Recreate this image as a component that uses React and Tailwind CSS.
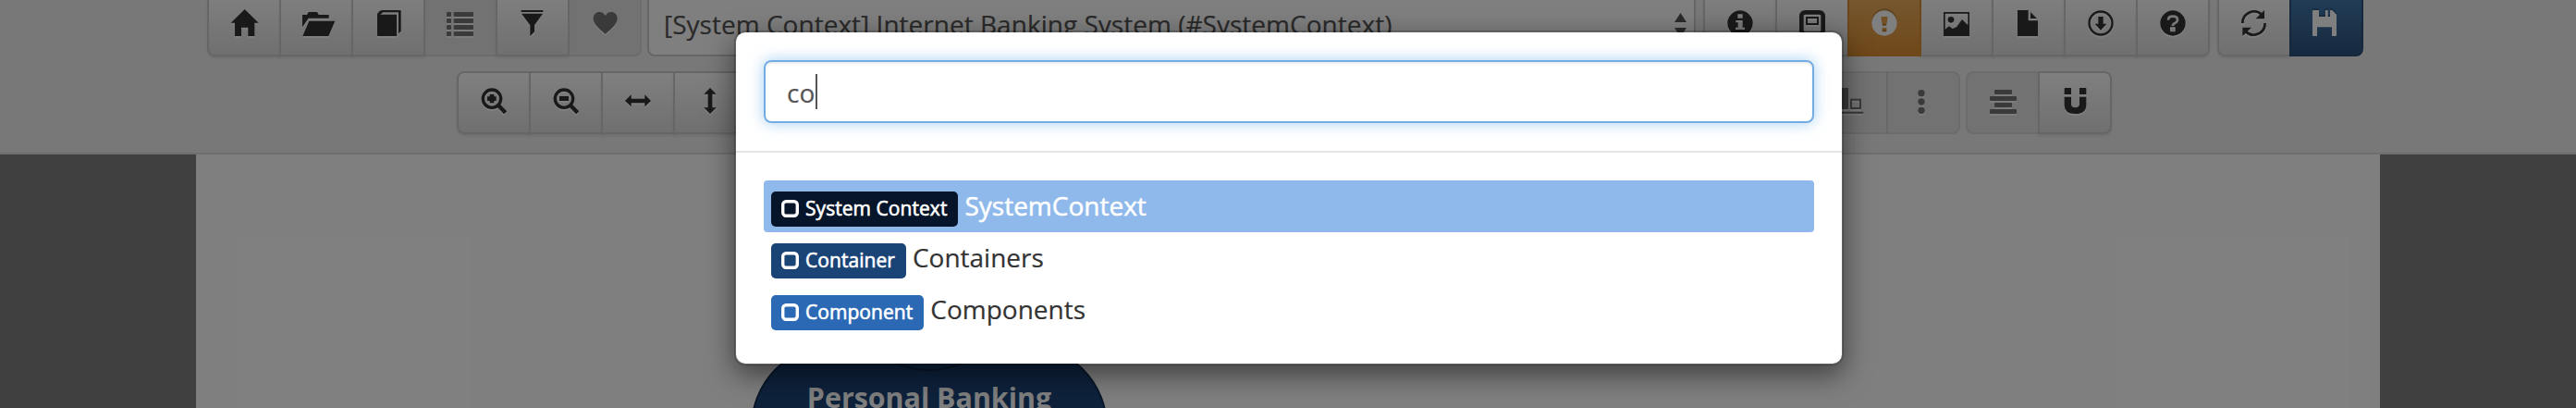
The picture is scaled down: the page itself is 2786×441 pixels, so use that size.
import React from "react";

/* Glyphs share an 84-unit square, shown at 28px. */
const glyphs = {
  home: <path d="M44-3 89 41H76V84H55V56H33V84H12V41H-1Z" />,
  folder: <path d="M-3 15H12L17 6H45L50 15H83V26H17L-3 55ZM19 35H103L82 84H-2Z" />,
  book: (
    <>
      <path d="M6 14H69V84H9Q6 84 6 81Z" />
      <path d="M6 16V12Q12 2 20 0H79Q83 0 83 4V68L75 76V7H24L17 14Z" />
    </>
  ),
  list: (
    <>
      {[6, 27, 48, 69].map((y) => (
        <React.Fragment key={y}>
          <rect x="-3" y={y} width="15" height="15" rx="3" />
          <rect x="20" y={y} width="64" height="15" rx="3" />
        </React.Fragment>
      ))}
    </>
  ),
  filter: <path d="M5 0H76V6H5ZM6 11H75L48 49V70L34 84V49Z" />,
  heart: <path d="M44 78C38 70 5 50 5 28C5 14 14 6 25 6C34 6 40 11 44 18C48 11 54 6 63 6C74 6 83 14 83 28C83 50 50 70 44 78Z" />,
  zoomIn: (
    <>
      <circle cx="36" cy="35" r="29" fill="none" stroke="currentColor" strokeWidth="10" />
      <path d="M58 58 80 80" stroke="currentColor" strokeWidth="13" />
      <path d="M29 21H43V28H50V42H43V49H29V42H21V28H29Z" />
    </>
  ),
  zoomOut: (
    <>
      <circle cx="36" cy="35" r="29" fill="none" stroke="currentColor" strokeWidth="10" />
      <path d="M58 58 80 80" stroke="currentColor" strokeWidth="13" />
      <path d="M21 27H51V42H21Z" />
    </>
  ),
  horizontal: <path d="M0 42 20 22V35H64V22L84 42 64 61V49H20V61Z" />,
  vertical: <path d="M42 0 62 20H49V64H62L42 84 22 64H35V20H22Z" />,
  info: <path fillRule="evenodd" d="M42 1A41 41 0 1 1 41.9 1ZM34 13V26H50V13ZM28 33V40H35V56H27V63H57V56H50V33Z" />,
  window: (
    <>
      <rect x="7" y="7" width="70" height="70" rx="12" fill="none" stroke="currentColor" strokeWidth="14" />
      <rect x="24" y="24" width="36" height="21" fill="none" stroke="currentColor" strokeWidth="6" />
    </>
  ),
  alert: <path fillRule="evenodd" d="M42 1A41 41 0 1 1 41.9 1ZM32 21V30L36 50H48L52 30V21ZM35 57V70H49V57Z" />,
  picture: (
    <>
      <path fillRule="evenodd" d="M0 6H84V84H0ZM5 11V62L18 52 29 60 42 55 60 30 79 49V11Z" />
      <circle cx="24" cy="31" r="10" />
    </>
  ),
  file: <path d="M6 0H41V34H72V84H6ZM48 6 69 27H48Z" />,
  download: (
    <>
      <circle cx="42" cy="42" r="37.5" fill="none" stroke="currentColor" strokeWidth="7" />
      <path d="M34 21H50V44H61L42 65 23 44H34Z" />
    </>
  ),
  help: (
    <>
      <path fillRule="evenodd" d="M42 1A41 41 0 1 1 41.9 1ZM33 55V70H50V55Z" />
      <path d="M27 32Q27 20 42 20Q57 20 57 31Q57 38 50 41Q42 44 41 51" fill="none" className="stroke-[#f0f0f0]" strokeWidth="8" />
    </>
  ),
  refresh: (
    <>
      <path d="M4 42A37 37 0 0 1 67 15M77 42A37 37 0 0 1 14 69" fill="none" stroke="currentColor" strokeWidth="8" />
      <path d="M75 0V28H47ZM4 84V56H33Z" />
    </>
  ),
  save: <path d="M-1 0H18V21H39V0H47V21H54V0H61L75 14V82L73 84H60V55H12V84H-1L-3 82V2Z" />,
  alignBottom: (
    <>
      <path d="M6 0H33V69H6ZM0 77H82V83H0Z" />
      <rect x="42" y="38" width="30" height="28" fill="none" stroke="currentColor" strokeWidth="6" />
    </>
  ),
  dots: (
    <>
      <circle cx="36" cy="17" r="11" />
      <circle cx="36" cy="45" r="11" />
      <circle cx="36" cy="73" r="11" />
    </>
  ),
  alignCenter: (
    <>
      <rect x="15" y="6" width="57" height="15" rx="3" />
      <rect x="0" y="27" width="87" height="15" rx="3" />
      <rect x="15" y="48" width="57" height="15" rx="3" />
      <rect x="0" y="69" width="87" height="15" rx="3" />
    </>
  ),
  magnet: <path d="M8 2Q8 0 10 0H30V21H8ZM57 0H77Q79 0 79 2V21H57ZM8 29H30V55Q32 64 43 64Q55 64 57 55V29H79V56Q78 84 43 84Q9 84 8 56Z" />,
};

function Glyph({ name, className = "" }) {
  return (
    <svg viewBox="0 0 84 84" className={`size-7 overflow-visible ${className}`} fill="currentColor">
      {glyphs[name]}
    </svg>
  );
}

const tones = {
  normal:
    "border-[#cccccc] bg-linear-to-b from-white to-[#e0e0e0] text-[#333333] shadow-[inset_0_2px_0_rgba(255,255,255,.15),0_2px_2px_rgba(0,0,0,.075)]",
  disabled: "border-[#cccccc] bg-[#e0e0e0] text-[#333333] opacity-65",
  warning: "z-10 border-[#d98f35] bg-linear-to-b from-[#ecb060] to-[#e09032] text-white",
  primary: "z-10 border-[#2a5078] bg-linear-to-b from-[#457bb0] to-[#2e557f] text-white",
};

function Group({ items }) {
  return (
    <div className="flex shrink-0">
      {items.map(([icon, tone = "normal"], i) => (
        <button
          key={i}
          className={`relative -mr-0.5 flex h-[68px] w-20 shrink-0 items-start border-2 pt-4 pl-6 first:rounded-l-lg last:mr-0 last:rounded-r-lg ${tones[tone]}`}
        >
          {icon && (
            <Glyph
              name={icon}
              className={tone === "normal" || tone === "disabled" ? "drop-shadow-[0_2px_0_#ffffff]" : "drop-shadow-[0_-2px_0_rgba(0,0,0,.2)]"}
            />
          )}
        </button>
      ))}
    </div>
  );
}

function Result({ label, color, name, active }) {
  return (
    <div className={`flex h-14 items-start rounded px-2 pt-3 ${active ? "bg-[#8fb9eb] text-white" : "text-[#333333]"}`}>
      <span className={`flex h-[38px] shrink-0 items-center rounded-[5px] pr-3 pl-[11px] text-[21px] leading-[38px] tracking-[0.05px] text-white [-webkit-text-stroke:0.6px] ${color}`}>
        <svg viewBox="0 0 19 19" className="-mt-px mr-[7px] size-[19px]" fill="none" stroke="currentColor" strokeWidth="3.4">
          <rect x="1.7" y="1.7" width="15.6" height="15.6" rx="3.5" />
        </svg>
        <span className="-mt-0.5">{label}</span>
      </span>
      <span className={`-mt-px ml-[7px] text-[28px] leading-8 ${active ? "[-webkit-text-stroke:0.5px]" : "[-webkit-text-stroke:0.2px]"}`}>{name}</span>
    </div>
  );
}

export default function App() {
  return (
    <div className="relative h-[441px] w-[2786px] overflow-hidden bg-[#808080] font-['Open_Sans',sans-serif]">
      <div className="isolate">
        <header className="flow-root h-[167px] border-b-2 border-[#dddddd] bg-[#f0f0f0]">
          <div className="-mt-[7px] flex pl-[224px]">
            <Group
              items={[["home"], ["folder"], ["book"], ["list", "disabled"], ["filter"], ["heart", "disabled"]]}
            />
            <div className="mr-2 ml-1.5 flex h-[68px] w-[1134px] shrink-0 justify-between rounded-lg border-2 border-[#cccccc] bg-white pr-2 pl-4 text-[28px] leading-[62px] text-[#555555] [-webkit-text-stroke:0.2px]">
              <span className="tracking-[0.02px] whitespace-nowrap">[System Context] Internet Banking System (#SystemContext)</span>
              <svg viewBox="0 0 13 26" className="mt-[19px] h-[26px] w-[13px] text-[#555555]" fill="currentColor">
                <path d="M6.5 0 13 10H0ZM0 16H13L6.5 26Z" />
              </svg>
            </div>
            <Group
              items={[["info"], ["window"], ["alert", "warning"], ["picture"], ["file"], ["download"], ["help"]]}
            />
            <div className="ml-2">
              <Group items={[["refresh"], ["save", "primary"]]} />
            </div>
          </div>
          <div className="mt-4 flex pl-[494px]">
            <Group items={[["zoomIn"], ["zoomOut"], ["horizontal"], ["vertical"], [null]]} />
            <div className="ml-[998px]">
              <Group items={[[null, "disabled"], ["alignBottom", "disabled"], ["dots", "disabled"]]} />
            </div>
            <div className="ml-1.5">
              <Group items={[["alignCenter", "disabled"], ["magnet"]]} />
            </div>
          </div>
        </header>

        <main className="relative mx-[212px] h-[274px] overflow-hidden bg-white">
          <div className="absolute top-[205px] left-[600px] h-[400px] w-[386px] rounded-[90px] border-2 border-[#132f54] bg-[#1c4478] pt-[34px] text-center text-[30.4px] leading-[44px] font-bold text-white">
            Personal Banking
          </div>
          <div className="absolute top-[54px] left-[703px] size-[180px] rounded-full border-2 border-[#132f54] bg-[#1c4478]" />
        </main>
      </div>

      <div className="absolute inset-0 bg-black/50" />

      <div className="absolute top-[33px] left-[794px] w-[1200px] rounded-xl border-2 border-black/20 bg-white bg-clip-padding shadow-[0_10px_30px_rgba(0,0,0,.5)]">
        <div className="border-b-2 border-[#e5e5e5] p-[30px]">
          <div className="flex h-[68px] items-center rounded-lg border-2 border-[#73ace3] pl-6 text-[28px] text-[#555555] shadow-[inset_0_2px_2px_rgba(0,0,0,.075),0_0_16px_rgba(102,175,233,.6)]">
            <span className="-ml-px pt-0.5 [-webkit-text-stroke:0.2px]">co</span>
            <span className="ml-px h-[38px] w-0.5 bg-[#555555]" />
          </div>
        </div>
        <div className="p-[30px] pb-[30px]">
          <Result label="System Context" color="bg-[#061529]" name="SystemContext" active />
          <Result label="Container" color="bg-[#1b4476]" name="Containers" />
          <Result label="Component" color="bg-[#2b69b5]" name="Components" />
        </div>
      </div>
    </div>
  );
}
